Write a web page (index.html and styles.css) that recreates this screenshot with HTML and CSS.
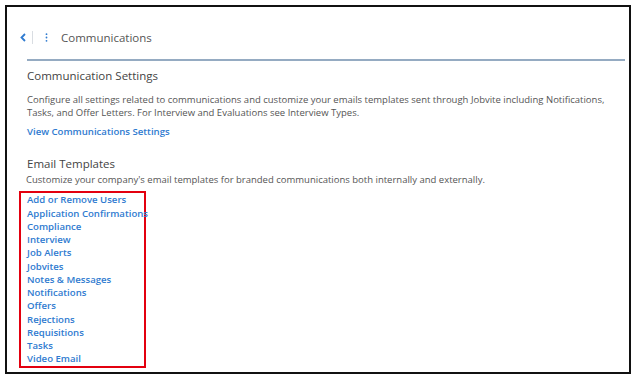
FILE: index.html
```html
<!DOCTYPE html>
<html lang="en">

<head>
    <meta charset="UTF-8">
    <title>Communications</title>
    <link rel="stylesheet" href="styles.css">
</head>

<body>
    <div class="frame">
        <div class="topbar">
            <span class="back">
                <svg width="6" height="9" viewBox="0 0 6 9"><path d="M5 1 L1.5 4.5 L5 8" fill="none" stroke="#2f7bd0" stroke-width="1.8"/></svg>
            </span>
            <span class="divider"></span>
            <span class="kebab">
                <svg width="3" height="9" viewBox="0 0 3 9"><circle cx="1.5" cy="1.2" r="0.9" fill="#2f7bd0"/><circle cx="1.5" cy="4.5" r="0.9" fill="#2f7bd0"/><circle cx="1.5" cy="7.8" r="0.9" fill="#2f7bd0"/></svg>
            </span>
            <span class="page-title">Communications</span>
        </div>
        <div class="rule"></div>

        <div class="content">
            <h2 class="section-title">Communication Settings</h2>
            <p class="desc">Configure all settings related to communications and customize your emails templates sent through Jobvite including Notifications, Tasks, and Offer Letters. For Interview and Evaluations see Interview Types.</p>
            <a class="link settings-link" href="#">View Communications Settings</a>

            <h2 class="section-title templates-title">Email Templates</h2>
            <p class="desc sub">Customize your company's email templates for branded communications both internally and externally.</p>

            <div class="template-box">
                <a class="link" href="#">Add or Remove Users</a>
                <a class="link" href="#">Application Confirmations</a>
                <a class="link" href="#">Compliance</a>
                <a class="link" href="#">Interview</a>
                <a class="link" href="#">Job Alerts</a>
                <a class="link" href="#">Jobvites</a>
                <a class="link" href="#">Notes &amp; Messages</a>
                <a class="link" href="#">Notifications</a>
                <a class="link" href="#">Offers</a>
                <a class="link" href="#">Rejections</a>
                <a class="link" href="#">Requisitions</a>
                <a class="link" href="#">Tasks</a>
                <a class="link" href="#">Video Email</a>
            </div>
        </div>
    </div>
</body>

</html>
```

FILE: styles.css
```css
* {
    margin: 0;
    padding: 0;
    box-sizing: border-box;
}

body {
    background: #fff;
    font-family: 'Open Sans', 'Noto Sans', sans-serif;
    color: #4a4a4a;
}

.frame {
    margin: 5px;
    width: 626px;
    height: 369px;
    border: 2px solid #111;
}

.topbar {
    display: flex;
    align-items: center;
    height: 20px;
    margin-top: 20px;
    padding-left: 13px;
}

.back {
    display: flex;
    width: 6px;
}

.divider {
    width: 1px;
    height: 13px;
    background: #d9dde2;
    margin-left: 6px;
}

.kebab {
    display: flex;
    margin-left: 12px;
}

.page-title {
    margin-left: 13px;
    font-size: 11.5px;
    color: #555;
}

.rule {
    margin: 12px 4px 0 20px;
    height: 2px;
    background: #95abc2;
}

.content {
    padding-left: 20px;
}

.section-title {
    font-size: 11.5px;
    font-weight: 400;
    color: #444;
    line-height: 20px;
    margin-top: 5px;
}

.desc {
    font-size: 9.5px;
    line-height: 13px;
    color: #555;
    margin-top: 7px;
}

.link {
    display: block;
    font-size: 9.6px;
    font-weight: 600;
    line-height: 13.25px;
    color: #2f7bd0;
    text-decoration: none;
    white-space: nowrap;
}

.settings-link {
    margin-top: 6px;
}

.templates-title {
    margin-top: 16px;
}

.sub {
    margin-top: -1px;
    margin-left: -1px;
}

.template-box {
    width: 127px;
    margin: 5px 0 0 -8px;
    padding: 0 0 0 6px;
    border: 2px solid #e3000f;
}
```
